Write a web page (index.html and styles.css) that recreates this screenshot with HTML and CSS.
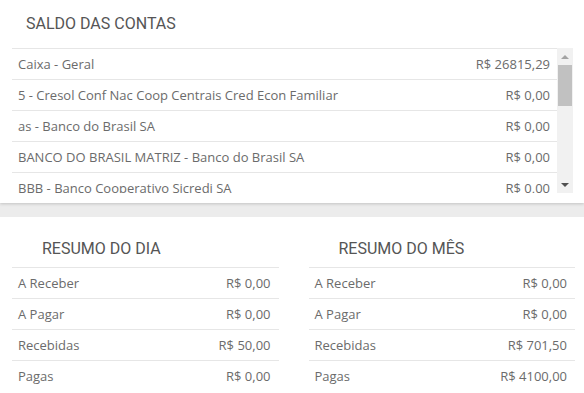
FILE: index.html
```html
<!DOCTYPE html>
<html lang="pt-BR">
<head>
    <meta charset="UTF-8">
    <title>Painel</title>
    <link rel="stylesheet" href="styles.css">
</head>
<body>
    <div class="card saldo">
        <h2>SALDO DAS CONTAS</h2>
        <div class="scroll-box">
            <div class="rows">
                <div class="row"><span>Caixa - Geral</span><span>R$ 26815,29</span></div>
                <div class="row"><span>5 - Cresol Conf Nac Coop Centrais Cred Econ Familiar</span><span>R$ 0,00</span></div>
                <div class="row"><span>as - Banco do Brasil SA</span><span>R$ 0,00</span></div>
                <div class="row"><span>BANCO DO BRASIL MATRIZ - Banco do Brasil SA</span><span>R$ 0,00</span></div>
                <div class="row"><span>BBB - Banco Cooperativo Sicredi SA</span><span>R$ 0,00</span></div>
            </div>
            <div class="scrollbar">
                <div class="arrow up"></div>
                <div class="track"><div class="thumb"></div></div>
                <div class="arrow down"></div>
            </div>
        </div>
    </div>

    <div class="card resumo">
        <div class="col">
            <h2>RESUMO DO DIA</h2>
            <div class="row"><span>A Receber</span><span>R$ 0,00</span></div>
            <div class="row"><span>A Pagar</span><span>R$ 0,00</span></div>
            <div class="row"><span>Recebidas</span><span>R$ 50,00</span></div>
            <div class="row"><span>Pagas</span><span>R$ 0,00</span></div>
        </div>
        <div class="col">
            <h2>RESUMO DO MÊS</h2>
            <div class="row"><span>A Receber</span><span>R$ 0,00</span></div>
            <div class="row"><span>A Pagar</span><span>R$ 0,00</span></div>
            <div class="row"><span>Recebidas</span><span>R$ 701,50</span></div>
            <div class="row"><span>Pagas</span><span>R$ 4100,00</span></div>
        </div>
    </div>
</body>
</html>
```

FILE: styles.css
```css
body {
    margin: 0;
    padding: 0;
    background: #ececec;
    font-family: "Open Sans", sans-serif;
    font-size: 13px;
    color: #6b6b6b;
}
.card {
    background: #fff;
}
h2 {
    font-family: Roboto, sans-serif;
    font-weight: 400;
    font-size: 16px;
    line-height: 19px;
    color: #555;
    margin: 0;
}
.saldo {
    height: 203px;
    box-shadow: 0 1px 3px rgba(0, 0, 0, 0.18);
    margin-bottom: 14px;
}
.saldo h2 {
    padding: 14px 0 15px 26px;
}
.scroll-box {
    display: flex;
    height: 145px;
    padding: 0 11px 0 12px;
    overflow: hidden;
}
.rows {
    flex: 1;
}
.row {
    display: flex;
    justify-content: space-between;
    align-items: center;
    height: 30px;
    border-top: 1px solid #e6e6e6;
    padding: 0 7px 0 6px;
    white-space: nowrap;
}
.scrollbar {
    width: 16px;
    display: flex;
    flex-direction: column;
    background: #f1f1f1;
}
.arrow {
    height: 17px;
    display: flex;
    justify-content: center;
    align-items: center;
}
.arrow::before {
    content: "";
    border-left: 4px solid transparent;
    border-right: 4px solid transparent;
}
.up::before {
    border-bottom: 4px solid #a3a3a3;
}
.down::before {
    border-top: 4px solid #505050;
}
.track {
    flex: 1;
    padding: 0 1px;
}
.thumb {
    height: 41px;
    background: #c1c1c1;
}
.resumo {
    display: flex;
    gap: 30px;
    padding: 22px 9px 10px 12px;
    min-height: 144px;
}
.col {
    flex: 1;
}
.col h2 {
    padding-left: 30px;
    margin-bottom: 9px;
}
.col .row {
    padding-right: 8px;
}
```
